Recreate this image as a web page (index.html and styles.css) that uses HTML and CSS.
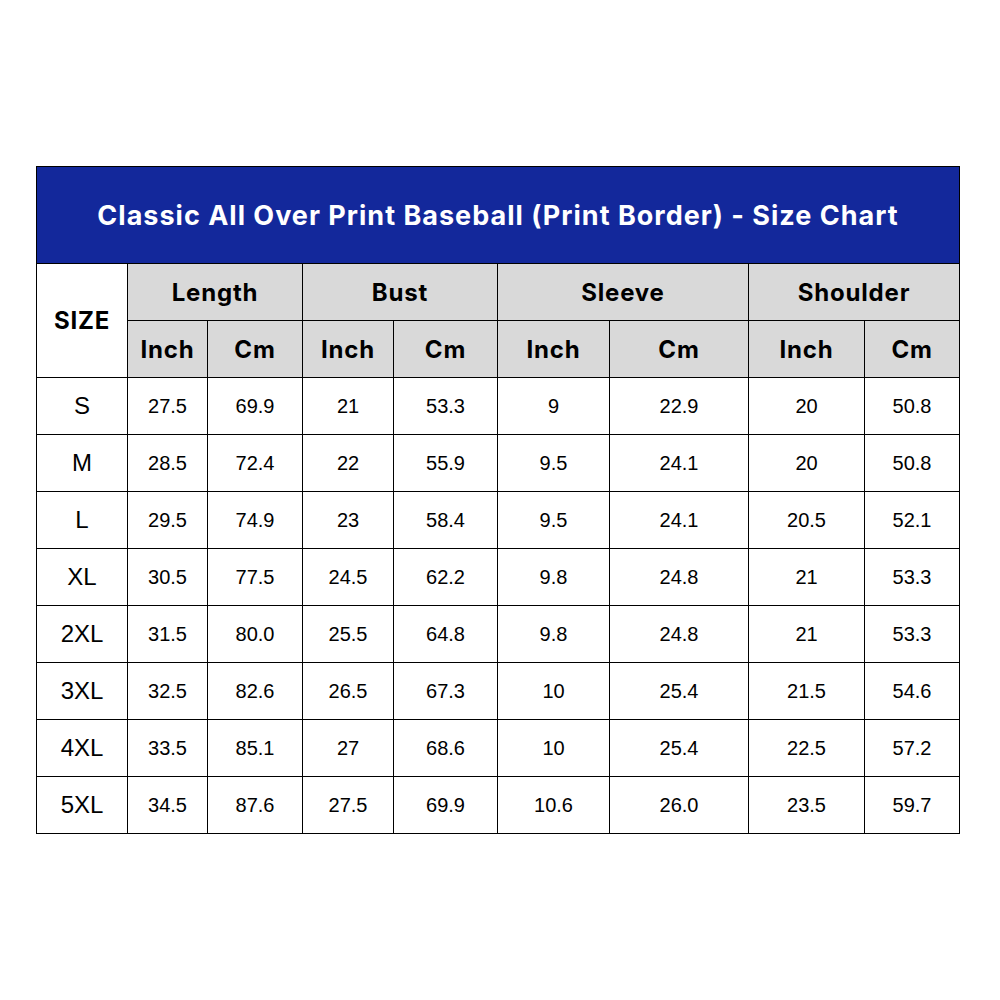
FILE: index.html
```html
<!DOCTYPE html>
<html>
<head>
<meta charset="utf-8">
<link rel="stylesheet" href="styles.css">
</head>
<body>
<div class="page">
<table class="chart">
  <colgroup>
    <col style="width:91px"><col style="width:80px"><col style="width:95px"><col style="width:91px"><col style="width:104px"><col style="width:112px"><col style="width:139px"><col style="width:116px"><col style="width:95px">
  </colgroup>
  <thead>
    <tr class="title-row"><th colspan="9" class="title">Classic All Over Print Baseball (Print Border) - Size Chart</th></tr>
    <tr class="head-row">
      <th rowspan="2" class="size-head">SIZE</th>
      <th colspan="2" class="group">Length</th>
      <th colspan="2" class="group">Bust</th>
      <th colspan="2" class="group">Sleeve</th>
      <th colspan="2" class="group">Shoulder</th>
    </tr>
    <tr class="head-row">
      <th class="group">Inch</th><th class="group">Cm</th>
      <th class="group">Inch</th><th class="group">Cm</th>
      <th class="group">Inch</th><th class="group">Cm</th>
      <th class="group">Inch</th><th class="group">Cm</th>
    </tr>
  </thead>
  <tbody>
    <tr><td class="size">S</td><td>27.5</td><td>69.9</td><td>21</td><td>53.3</td><td>9</td><td>22.9</td><td>20</td><td>50.8</td></tr>
    <tr><td class="size">M</td><td>28.5</td><td>72.4</td><td>22</td><td>55.9</td><td>9.5</td><td>24.1</td><td>20</td><td>50.8</td></tr>
    <tr><td class="size">L</td><td>29.5</td><td>74.9</td><td>23</td><td>58.4</td><td>9.5</td><td>24.1</td><td>20.5</td><td>52.1</td></tr>
    <tr><td class="size">XL</td><td>30.5</td><td>77.5</td><td>24.5</td><td>62.2</td><td>9.8</td><td>24.8</td><td>21</td><td>53.3</td></tr>
    <tr><td class="size">2XL</td><td>31.5</td><td>80.0</td><td>25.5</td><td>64.8</td><td>9.8</td><td>24.8</td><td>21</td><td>53.3</td></tr>
    <tr><td class="size">3XL</td><td>32.5</td><td>82.6</td><td>26.5</td><td>67.3</td><td>10</td><td>25.4</td><td>21.5</td><td>54.6</td></tr>
    <tr><td class="size">4XL</td><td>33.5</td><td>85.1</td><td>27</td><td>68.6</td><td>10</td><td>25.4</td><td>22.5</td><td>57.2</td></tr>
    <tr><td class="size">5XL</td><td>34.5</td><td>87.6</td><td>27.5</td><td>69.9</td><td>10.6</td><td>26.0</td><td>23.5</td><td>59.7</td></tr>
  </tbody>
</table>
</div>
</body>
</html>
```
FILE: styles.css
```css
html, body {
  margin: 0;
  padding: 0;
  background: #ffffff;
}
.page {
  padding: 166px 0 0 36px;
}
.chart {
  border-collapse: collapse;
  table-layout: fixed;
  width: 923px;
}
.chart th, .chart td {
  border: 1px solid #000000;
  padding: 0;
  text-align: center;
  vertical-align: middle;
  color: #000000;
}
.title-row th {
  height: 96px;
}
.title {
  background: #13289b;
  color: #ffffff !important;
  font-family: Inter, "Liberation Sans", sans-serif;
  font-weight: 700;
  font-size: 27px;
  letter-spacing: 1px;
}
.head-row th {
  height: 56px;
  font-family: Inter, "Liberation Sans", sans-serif;
  font-weight: 700;
  font-size: 24px;
  letter-spacing: 0.8px;
}
.group {
  background: #d9d9d9;
}
.size-head {
  background: #ffffff;
}
.chart tbody td {
  height: 56px;
  font-family: "Liberation Sans", Arial, sans-serif;
  font-size: 20px;
}
.chart tbody td.size {
  font-size: 24px;
}
```
